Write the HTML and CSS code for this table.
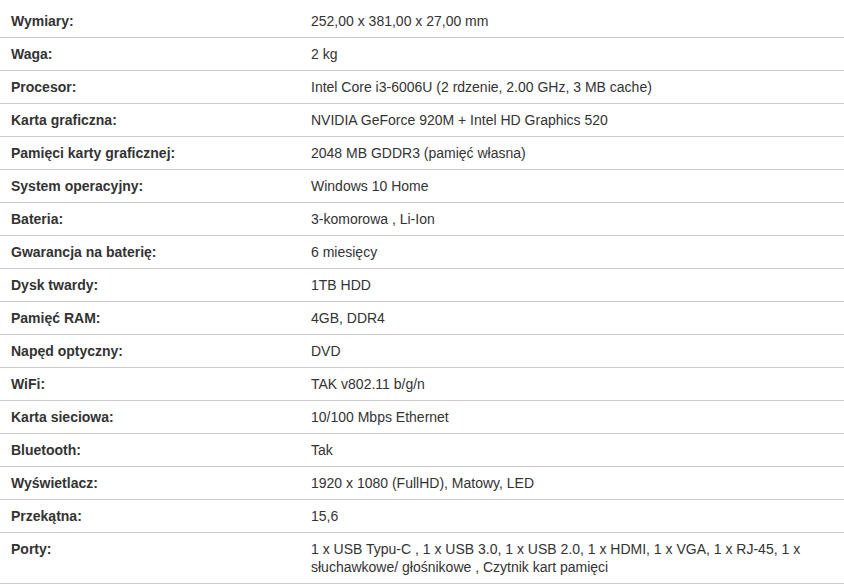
FILE: index.html
```html
<!DOCTYPE html>
<html lang="pl">
<head>
<meta charset="utf-8">
<title>Specyfikacja</title>
<link rel="stylesheet" href="styles.css">
</head>
<body>
<table class="specs">
<tbody>
<tr><th>Wymiary:</th><td>252,00 x 381,00 x 27,00 mm</td></tr>
<tr><th>Waga:</th><td>2 kg</td></tr>
<tr><th>Procesor:</th><td>Intel Core i3-6006U (2 rdzenie, 2.00 GHz, 3 MB cache)</td></tr>
<tr><th>Karta graficzna:</th><td>NVIDIA GeForce 920M + Intel HD Graphics 520</td></tr>
<tr><th>Pamięci karty graficznej:</th><td>2048 MB GDDR3 (pamięć własna)</td></tr>
<tr><th>System operacyjny:</th><td>Windows 10 Home</td></tr>
<tr><th>Bateria:</th><td>3-komorowa , Li-Ion</td></tr>
<tr><th>Gwarancja na baterię:</th><td>6 miesięcy</td></tr>
<tr><th>Dysk twardy:</th><td>1TB HDD</td></tr>
<tr><th>Pamięć RAM:</th><td>4GB, DDR4</td></tr>
<tr><th>Napęd optyczny:</th><td>DVD</td></tr>
<tr><th>WiFi:</th><td>TAK v802.11 b/g/n</td></tr>
<tr><th>Karta sieciowa:</th><td>10/100 Mbps Ethernet</td></tr>
<tr><th>Bluetooth:</th><td>Tak</td></tr>
<tr><th>Wyświetlacz:</th><td>1920 x 1080 (FullHD), Matowy, LED</td></tr>
<tr><th>Przekątna:</th><td>15,6</td></tr>
<tr><th>Porty:</th><td>1 x USB Typu-C , 1 x USB 3.0, 1 x USB 2.0, 1 x HDMI, 1 x VGA, 1 x RJ-45, 1 x słuchawkowe/ głośnikowe , Czytnik kart pamięci</td></tr>
</tbody>
</table>
</body>
</html>
```
FILE: styles.css
```css
html, body {
  margin: 0;
  padding: 0;
  background: #fff;
}
body {
  padding-top: 5px;
  font-family: "Liberation Sans", Arial, sans-serif;
  font-size: 14px;
  color: #333;
}
.specs {
  width: 844px;
  border-collapse: collapse;
}
.specs th,
.specs td {
  padding: 7px 10px 7px 11px;
  line-height: 18px;
  text-align: left;
  vertical-align: top;
  border-bottom: 1px solid #ccc;
}
.specs th {
  width: 279px;
  font-weight: bold;
}
.specs td {
  font-weight: normal;
  padding-right: 30px;
}
```
